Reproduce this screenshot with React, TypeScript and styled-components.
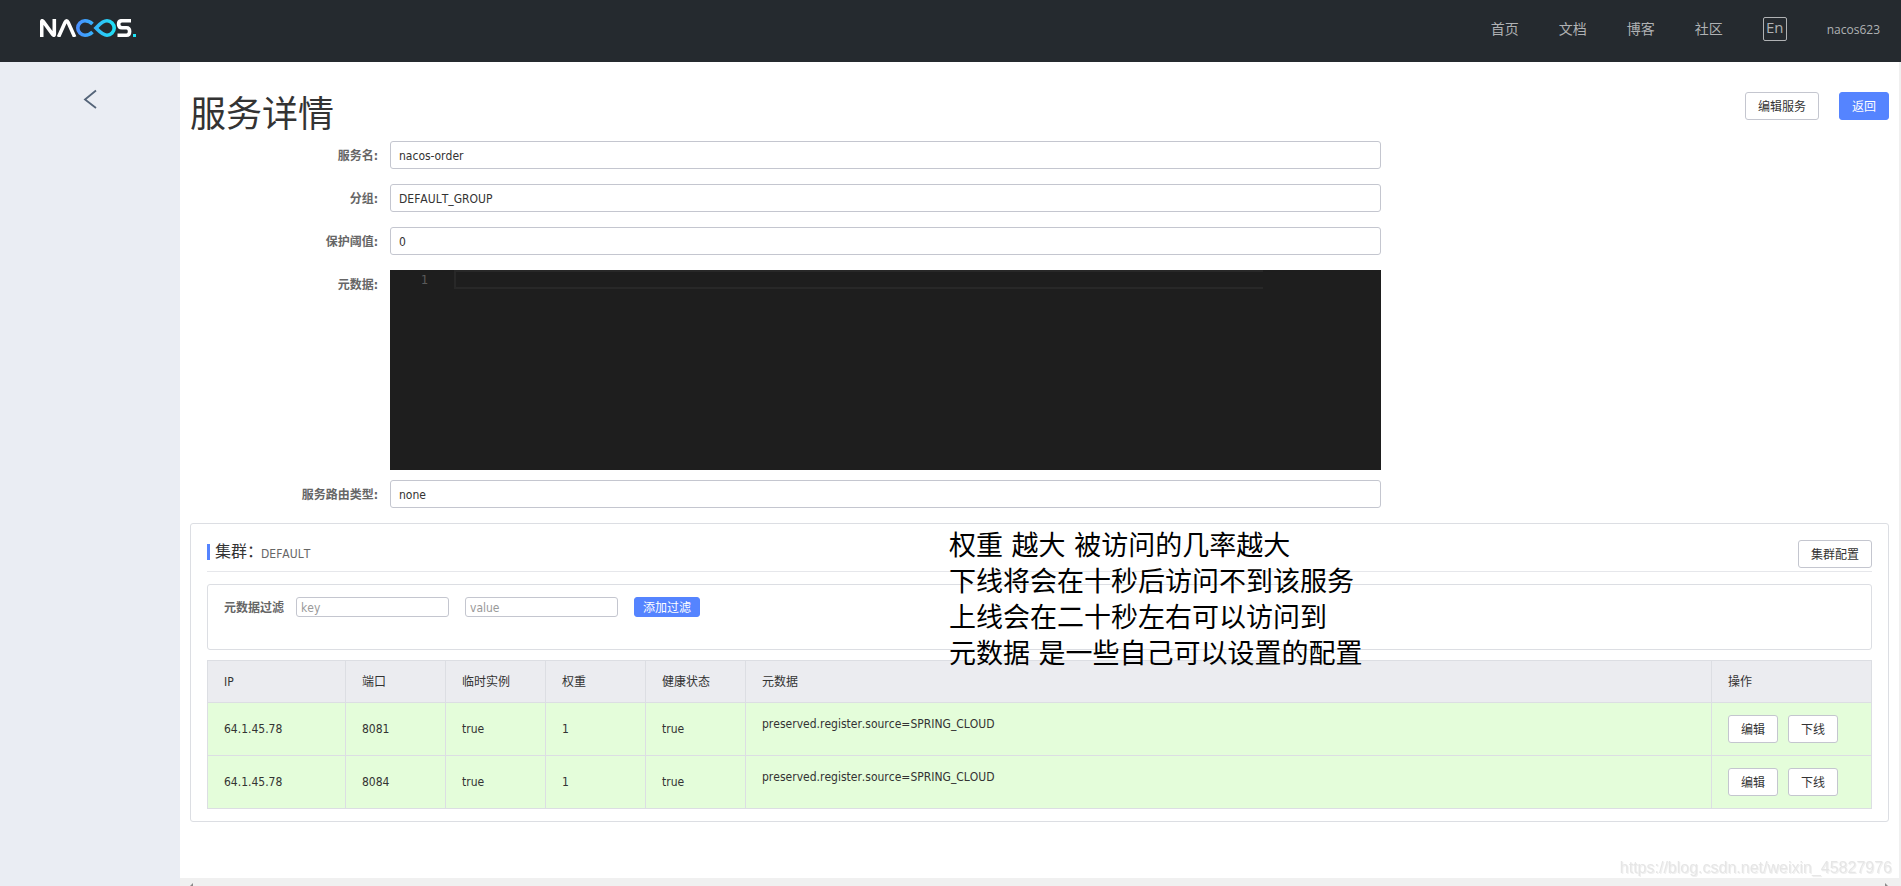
import React from 'react';
import styled, { createGlobalStyle, css } from 'styled-components';

const GlobalStyle = createGlobalStyle`
  * { box-sizing: border-box; }
  html, body, #root { height: 100%; }
  body {
    margin: 0;
    background: #fff;
    color: #333;
    font-family: "DejaVu Sans Condensed", "Noto Sans CJK SC", sans-serif;
    font-size: 12px;
    font-kerning: none;
    line-height: 16px;
  }
  button, input, textarea { font-family: inherit; font-size: 12px; font-kerning: none; }
`;

const Page = styled.div`
  display: flex;
  flex-direction: column;
  min-height: 100%;
`;

const TopBar = styled.header`
  display: flex;
  align-items: center;
  justify-content: space-between;
  height: 62px;
  padding: 0 21px 0 40px;
  background: #252a2f;
`;

const LogoLink = styled.a`
  display: block;
  height: 18px;
  margin-bottom: 6px;
  svg { display: block; }
`;

const Nav = styled.nav`
  display: flex;
  align-items: center;
  gap: 40px;
  margin-bottom: 4px;
`;

const NavLink = styled.a`
  color: #b0b2b4;
  font-family: "Open Sans", "Noto Sans CJK SC", sans-serif;
  font-size: 14px;
  line-height: 20px;
  text-decoration: none;
`;

const UserLink = styled(NavLink)`
  padding-top: 2px;
  font-size: 12px;
`;

const LangButton = styled.button`
  width: 24px;
  height: 24px;
  padding: 0 0 4px;
  border: 1px solid #b0b2b4;
  border-radius: 2px;
  background: none;
  color: #b0b2b4;
  && { font-family: "Open Sans", sans-serif; font-size: 15px; }
  line-height: 18px;
`;

const Body = styled.div`
  display: flex;
  flex: 1;
`;

const Sidebar = styled.aside`
  flex: none;
  width: 180px;
  padding-top: 27px;
  background: #eaedf3;
`;

const BackButton = styled.button`
  display: block;
  margin: 0 auto;
  padding: 0;
  border: 0;
  background: none;
  svg { display: block; }
`;

const Column = styled.div`
  display: flex;
  flex: 1;
  flex-direction: column;
  min-width: 0;
`;

const Main = styled.main`
  flex: 1;
  padding: 30px 10px 0;
  border-right: 2px solid #f0f0f0;
`;

const ScrollStrip = styled.div`
  display: flex;
  align-items: flex-end;
  justify-content: space-between;
  height: 8px;
  padding: 0 13px 0 10px;
  background: #f0f0f0;
  svg { display: block; }
`;

const TitleRow = styled.div`
  display: flex;
  align-items: flex-start;
  justify-content: space-between;
  height: 49px;
`;

const Title = styled.h1`
  margin: 0;
  color: #333;
  font-size: 36px;
  font-weight: 400;
  line-height: 46px;
`;

const Actions = styled.div<{ $gap: number }>`
  display: flex;
  gap: ${(p) => p.$gap}px;
`;

const Button = styled.button<{ $primary?: boolean; $small?: boolean }>`
  height: ${(p) => (p.$small ? 20 : 28)}px;
  padding: 2px ${(p) => (p.$small ? 8 : 12)}px 0;
  border: 1px solid #c4c6cf;
  border-radius: 3px;
  background: #fff;
  color: #333;
  line-height: 16px;
  white-space: nowrap;
  ${(p) =>
    p.$primary &&
    css`
      border-color: #5584ff;
      background: #5584ff;
      color: #fff;
    `}
`;

const Form = styled.form`
  display: flex;
  flex-direction: column;
`;

const Field = styled.div<{ $gap?: number }>`
  display: flex;
  margin-bottom: ${(p) => p.$gap ?? 15}px;
`;

const FieldLabel = styled.label`
  flex: none;
  width: 200px;
  height: 28px;
  padding-right: 12px;
  color: #666;
  font-weight: 700;
  line-height: 30px;
  text-align: right;
`;

const TextInput = styled.input`
  width: 58.33%;
  height: 28px;
  padding: 2px 8px 0;
  border: 1px solid #c4c6cf;
  border-radius: 3px;
  background: #fff;
  color: #333;
`;

const Editor = styled.div`
  display: flex;
  width: 58.33%;
  height: 200px;
  background: #1e1e1e;
`;

const Gutter = styled.div`
  flex: none;
  width: 64px;
  padding-right: 26px;
  color: #5a5a5a;
  font-family: "DejaVu Sans Mono", monospace;
  font-size: 12px;
  line-height: 20px;
  text-align: right;
`;

const CodeArea = styled.textarea`
  flex: 1;
  min-width: 0;
  height: 19px;
  margin-right: 118px;
  padding: 0;
  border: 2px solid #282828;
  border-right: 0;
  background: none;
  color: #d4d4d4;
  outline: none;
  resize: none;
`;

const Card = styled.section`
  position: relative;
  padding: 16px 16px 12px;
  border: 1px solid #dcdee3;
  border-radius: 3px;
`;

const CardHead = styled.div`
  display: flex;
  align-items: flex-start;
  justify-content: space-between;
  padding-bottom: 3px;
  border-bottom: 1px solid #e6e7eb;
`;

const CardTitle = styled.h2`
  display: flex;
  align-items: center;
  margin: 4px 0 0;
  padding-left: 5px;
  border-left: 3px solid #5584ff;
  color: #333;
  font-size: 16px;
  font-weight: 400;
  line-height: 16px;
`;

const ClusterName = styled.span`
  margin-left: -2px;
  padding-top: 4px;
  color: #666;
  font-size: 12px;
  line-height: 12px;
`;

const FilterPanel = styled.div`
  display: flex;
  align-items: flex-start;
  height: 66px;
  margin: 12px 0 10px;
  padding: 12px 16px;
  border: 1px solid #dcdee3;
  border-radius: 3px;
`;

const FilterLabel = styled.label`
  margin-right: 12px;
  color: #666;
  font-weight: 700;
  line-height: 22px;
`;

const FilterInput = styled.input`
  width: 153px;
  height: 20px;
  margin-right: 16px;
  padding: 2px 4px 0;
  border: 1px solid #c4c6cf;
  border-radius: 3px;
  &::placeholder { color: #999; }
`;

const Table = styled.table`
  width: 100%;
  border-collapse: separate;
  border-spacing: 0;
  border-top: 1px solid #dcdee3;
  border-left: 1px solid #dcdee3;
  table-layout: fixed;
`;

const Col = styled.col<{ $width?: number }>`
  width: ${(p) => (p.$width ? `${p.$width}px` : 'auto')};
`;

const HeadCell = styled.th`
  height: 42px;
  padding: 0 16px;
  border-right: 1px solid #dcdee3;
  border-bottom: 1px solid #dcdee3;
  background: #ebecf0;
  font-weight: 400;
  text-align: left;
`;

const Cell = styled.td<{ $top?: boolean }>`
  height: 53px;
  padding: 12px 16px;
  border-right: 1px solid #dcdee3;
  border-bottom: 1px solid #dcdee3;
  background: #e4fdda;
  line-height: ${(p) => (p.$top ? 18 : 16)}px;
  vertical-align: ${(p) => (p.$top ? 'top' : 'middle')};
`;

const Note = styled.p`
  position: absolute;
  top: 4px;
  left: 758px;
  margin: 0;
  color: #000;
  font-family: "DejaVu Sans", "Noto Sans CJK SC", sans-serif;
  font-size: 27px;
  line-height: 36px;
  white-space: pre;
`;

const Watermark = styled.div`
  position: fixed;
  right: 9px;
  bottom: 8px;
  color: #e6e6e6;
  font-family: "Liberation Sans", sans-serif;
  font-size: 16px;
  line-height: 20px;
  text-shadow: 1px 1px 0 #f0f0f0;
`;

const Logo = () => (
  <svg width="97" height="18" viewBox="0 0 97 18" fill="none" aria-label="NACOS" role="img">
    <defs>
      <linearGradient id="loop" x1="36" y1="9" x2="76" y2="9" gradientUnits="userSpaceOnUse">
        <stop offset="0" stopColor="#4a8cff" />
        <stop offset="1" stopColor="#1ee3f5" />
      </linearGradient>
    </defs>
    <path d="M1.7 18V3Q1.7 0.8 3.2 2.4L12.8 15.6Q14.3 17.2 14.3 15V0" stroke="#fff" strokeWidth="3.6" />
    <path d="M18.5 18L25 3.6Q26.6 0.2 28.2 3.6L34.7 18" stroke="#fff" strokeWidth="3.6" />
    <path
      d="M52.5 5C50.5 3 48.2 1.8 45 1.8A7.2 7.2 0 0 0 45 16.2C48.2 16.2 50.5 15 52.5 13M67 1.8A7.2 7.2 0 0 1 67 16.2C62.5 16.2 59.5 12.5 56 9C59.5 5.5 62.5 1.8 67 1.8Z"
      stroke="url(#loop)"
      strokeWidth="3.6"
    />
    <path d="M91 1.7H82Q78.6 1.7 78.6 5Q78.6 8.8 82 8.8H86.5Q89.6 8.8 89.6 12.5Q89.6 16.2 86.5 16.2H77.5" stroke="#fff" strokeWidth="3.6" />
    <rect x="93" y="15" width="3" height="3" fill="#1ee3f5" />
  </svg>
);

const navItems = ['首页', '文档', '博客', '社区'];
const columns = ['IP', '端口', '临时实例', '权重', '健康状态', '元数据', '操作'];
const widths = [138, 100, 100, 100, 100, undefined, 160];
const instances = [
  { ip: '64.1.45.78', port: '8081' },
  { ip: '64.1.45.78', port: '8084' },
];

export default function App() {
  return (
    <Page>
      <GlobalStyle />
      <TopBar>
        <LogoLink href="#"><Logo /></LogoLink>
        <Nav>
          {navItems.map((item) => <NavLink key={item} href="#">{item}</NavLink>)}
          <LangButton type="button">En</LangButton>
          <UserLink href="#">nacos623</UserLink>
        </Nav>
      </TopBar>
      <Body>
        <Sidebar>
          <BackButton type="button" aria-label="返回">
            <svg width="14" height="20" viewBox="0 0 14 20" fill="none">
              <path d="M13 1.5L2 10.5L13 19" stroke="#546478" strokeWidth="1.8" />
            </svg>
          </BackButton>
        </Sidebar>
        <Column>
          <Main>
            <TitleRow>
              <Title>服务详情</Title>
              <Actions $gap={20}>
                <Button type="button">编辑服务</Button>
                <Button type="button" $primary>返回</Button>
              </Actions>
            </TitleRow>
            <Form>
              <Field>
                <FieldLabel htmlFor="name">服务名:</FieldLabel>
                <TextInput id="name" defaultValue="nacos-order" />
              </Field>
              <Field>
                <FieldLabel htmlFor="group">分组:</FieldLabel>
                <TextInput id="group" defaultValue="DEFAULT_GROUP" />
              </Field>
              <Field>
                <FieldLabel htmlFor="threshold">保护阈值:</FieldLabel>
                <TextInput id="threshold" defaultValue="0" />
              </Field>
              <Field $gap={10}>
                <FieldLabel htmlFor="metadata">元数据:</FieldLabel>
                <Editor>
                  <Gutter>1</Gutter>
                  <CodeArea id="metadata" />
                </Editor>
              </Field>
              <Field>
                <FieldLabel htmlFor="selector">服务路由类型:</FieldLabel>
                <TextInput id="selector" defaultValue="none" />
              </Field>
            </Form>
            <Card>
              <CardHead>
                <CardTitle>集群：<ClusterName>DEFAULT</ClusterName></CardTitle>
                <Button type="button">集群配置</Button>
              </CardHead>
              <FilterPanel>
                <FilterLabel htmlFor="filter-key">元数据过滤</FilterLabel>
                <FilterInput id="filter-key" placeholder="key" />
                <FilterInput placeholder="value" aria-label="value" />
                <Button type="button" $primary $small>添加过滤</Button>
              </FilterPanel>
              <Table>
                <colgroup>{widths.map((w, i) => <Col key={i} $width={w} />)}</colgroup>
                <thead>
                  <tr>{columns.map((c) => <HeadCell key={c}>{c}</HeadCell>)}</tr>
                </thead>
                <tbody>
                  {instances.map((row) => (
                    <tr key={row.port}>
                      <Cell>{row.ip}</Cell>
                      <Cell>{row.port}</Cell>
                      <Cell>true</Cell>
                      <Cell>1</Cell>
                      <Cell>true</Cell>
                      <Cell $top>preserved.register.source=SPRING_CLOUD</Cell>
                      <Cell>
                        <Actions $gap={10}>
                          <Button type="button">编辑</Button>
                          <Button type="button">下线</Button>
                        </Actions>
                      </Cell>
                    </tr>
                  ))}
                </tbody>
              </Table>
              <Note>{'权重 越大 被访问的几率越大\n下线将会在十秒后访问不到该服务\n上线会在二十秒左右可以访问到\n元数据 是一些自己可以设置的配置'}</Note>
            </Card>
          </Main>
          <ScrollStrip>
            <svg width="4" height="3" viewBox="0 0 4 3"><path d="M3 0V3H0Z" fill="#8a8a8a" /></svg>
            <svg width="4" height="3" viewBox="0 0 4 3"><path d="M1 0V3H4Z" fill="#8a8a8a" /></svg>
          </ScrollStrip>
        </Column>
      </Body>
      <Watermark>https://blog.csdn.net/weixin_45827976</Watermark>
    </Page>
  );
}
